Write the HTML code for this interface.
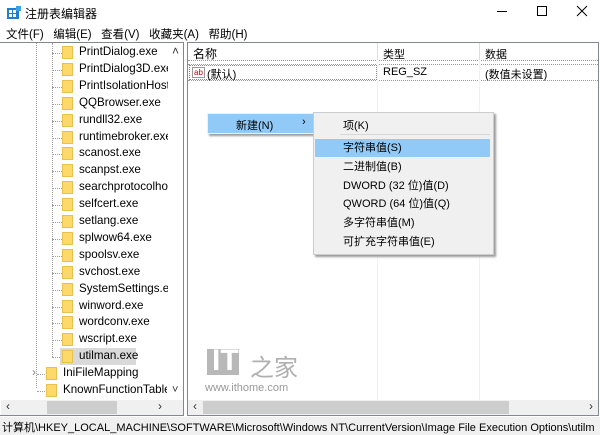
<!DOCTYPE html><html><head><meta charset="utf-8"><style>
*{margin:0;padding:0;box-sizing:border-box}
body{width:600px;height:435px;background:#fff;font-family:"Liberation Sans","Noto Sans CJK SC",sans-serif;font-size:11.5px;color:#000;position:relative;overflow:hidden}
.a{position:absolute;white-space:nowrap}
.f{position:absolute;width:11px;height:13px;background:#fcd96a;border:1px solid #e8c04c}
.r{position:absolute;left:79px;font-size:11.6px}
.hl{position:absolute;border-top:1px dotted #a0a0a0;width:12px}
</style></head><body>
<svg class="a" style="left:7px;top:6px" width="14" height="14"><rect x="0" y="2" width="12" height="11" fill="#1e7fd0"/><g fill="#fff"><rect x="2" y="4" width="3" height="3"/><rect x="6" y="4" width="3" height="3"/><rect x="2" y="8" width="3" height="3"/><rect x="6" y="8" width="3" height="3"/></g><rect x="9" y="0" width="5" height="5" fill="#3aa0e8"/></svg>
<div class="a" style="left:25px;top:5px;font-size:12px">注册表编辑器</div>
<div class="a" style="left:497px;top:11px;width:10px;border-top:1px solid #000"></div>
<div class="a" style="left:537px;top:6px;width:10px;height:10px;border:1px solid #000"></div>
<svg class="a" style="left:576px;top:5px" width="12" height="12"><path d="M1 1L11 11M11 1L1 11" stroke="#000" stroke-width="1"/></svg>
<div class="a" style="left:6px;top:26px;font-size:11.5px">文件(F)&nbsp;&nbsp;&nbsp;编辑(E)&nbsp;&nbsp;&nbsp;查看(V)&nbsp;&nbsp;&nbsp;收藏夹(A)&nbsp;&nbsp;&nbsp;帮助(H)</div>
<div class="a" style="left:0;top:42px;width:184px;height:374px;border:1px solid #828790;border-left:none"></div>
<div class="a" style="left:36px;top:43px;height:345px;border-left:1px dotted #a0a0a0"></div>
<div class="a" style="left:52px;top:43px;height:314px;border-left:1px dotted #a0a0a0"></div>
<div class="a" style="left:172px;top:44px;font-size:12px;color:#333">˄</div>
<div class="a" style="left:172px;top:384px;font-size:11px;color:#333">˅</div>
<div class="a" style="left:1px;top:400px;width:182px;height:15px;background:#f0f0f0"></div>
<div class="a" style="left:47px;top:401px;width:70px;height:13px;background:#cdcdcd"></div>
<div class="a" style="left:6px;top:399px;font-size:12px;color:#333">‹</div>
<div class="a" style="left:158px;top:399px;font-size:12px;color:#333">›</div>
<div id="tree"></div>
<div class="a" style="left:187px;top:42px;width:412px;height:374px;border:1px solid #828790"></div>
<div class="a" style="left:188px;top:60px;width:410px;border-top:1px dotted #999"></div>
<div class="a" style="left:188px;top:64px;width:410px;border-top:1px dotted #999"></div>
<div class="a" style="left:188px;top:80px;width:410px;border-top:1px dotted #999"></div>
<div class="a" style="left:377px;top:43px;height:357px;border-left:1px solid #eef2f8"></div>
<div class="a" style="left:479px;top:43px;height:357px;border-left:1px solid #eef2f8"></div>
<div class="a" style="left:377px;top:43px;height:17px;border-left:1px solid #ddd"></div>
<div class="a" style="left:479px;top:43px;height:17px;border-left:1px solid #ddd"></div>
<div class="a" style="left:193px;top:45px;font-size:12px">名称</div>
<div class="a" style="left:383px;top:46px;font-size:11px">类型</div>
<div class="a" style="left:485px;top:46px;font-size:11px">数据</div>
<div class="a" style="left:189px;top:65px;width:188px;height:15px;border:1px dotted #888"></div>
<div class="a" style="left:192px;top:67px;width:13px;height:11px;border:1px solid #999;font-size:8px;color:#c00;line-height:9px;padding-left:1px">ab</div>
<div class="a" style="left:207px;top:66px;font-size:11px">(默认)</div>
<div class="a" style="left:383px;top:66px;font-size:11px">REG_SZ</div>
<div class="a" style="left:485px;top:66px;font-size:11px">(数值未设置)</div>
<div class="a" style="left:188px;top:400px;width:410px;height:15px;background:#f0f0f0"></div>
<div class="a" style="left:203px;top:401px;width:306px;height:13px;background:#cdcdcd"></div>
<div class="a" style="left:193px;top:399px;font-size:12px;color:#333">‹</div>
<div class="a" style="left:589px;top:399px;font-size:12px;color:#333">›</div>
<div class="a" style="left:207px;top:349px;width:32px;height:26px;background:#b8b8b8"></div>
<div class="a" style="left:212px;top:346px;font-size:30px;font-weight:bold;color:#fff;line-height:30px">IT</div>
<div class="a" style="left:250px;top:348px;font-size:24px;color:#b0b0b0;font-family:'Noto Sans CJK SC',sans-serif">之家</div>
<div class="a" style="left:205px;top:382px;font-size:11px;color:#999">www.ithome.com</div>
<div class="a" style="left:0;top:417px;width:600px;height:18px;background:#f0f0f0"></div>
<div class="a" style="left:2px;top:419px;font-size:11px">计算机\HKEY_LOCAL_MACHINE\SOFTWARE\Microsoft\Windows NT\CurrentVersion\Image File Execution Options\utilm</div>
<div class="a" style="left:207px;top:113px;width:108px;height:21px;background:#f0f0f0;box-shadow:2px 2px 2px #999"></div>
<div class="a" style="left:208px;top:114px;width:106px;height:19px;background:#91c9f7"></div>
<div class="a" style="left:236px;top:117px;font-size:11px">新建(N)</div>
<div class="a" style="left:302px;top:116px;font-size:11px">›</div>
<div class="a" style="left:313px;top:112px;width:181px;height:143px;background:#f0f0f0;border:1px solid #ccc;box-shadow:2px 2px 2px #999"></div>
<div class="a" style="left:340px;top:134px;width:150px;border-top:1px solid #d7d7d7"></div>
<div class="a" style="left:315px;top:139px;width:175px;height:18px;background:#91c9f7"></div>
<div class="a" style="left:343px;top:117px;font-size:11px;line-height:19px">项(K)</div>
<div class="a" style="left:343px;top:139px;font-size:11px;line-height:18.8px">字符串值(S)<br>二进制值(B)<br>DWORD (32 位)值(D)<br>QWORD (64 位)值(Q)<br>多字符串值(M)<br>可扩充字符串值(E)</div>
<script>
var n=["PrintDialog.exe","PrintDialog3D.exe","PrintIsolationHost","QQBrowser.exe","rundll32.exe","runtimebroker.exe","scanost.exe","scanpst.exe","searchprotocolho","selfcert.exe","setlang.exe","splwow64.exe","spoolsv.exe","svchost.exe","SystemSettings.ex","winword.exe","wordconv.exe","wscript.exe","utilman.exe"];
var h="";
n.forEach(function(s,i){var y=45+i*16.9;
h+='<div class="hl" style="left:52px;top:'+(y+8)+'px"></div><div class="f" style="left:62px;top:'+(y+1)+'px"></div>';
if(i==18)h+='<div class="a" style="left:60px;top:'+(y-1)+'px;width:76px;height:17px;background:#d9d9d9"></div><div class="f" style="left:62px;top:'+(y+1)+'px"></div>';
h+='<div class="r" style="top:'+y+'px;width:89px;overflow:hidden">'+s+'</div>';});
[["IniFileMapping",366],["KnownFunctionTable[",383]].forEach(function(a,i){var y=a[1];
h+='<div class="hl" style="left:37px;top:'+(y+8)+'px"></div><div class="f" style="left:46px;top:'+(y+1)+'px"></div><div class="a" style="left:63px;top:'+y+'px;font-size:11.6px;width:104px;overflow:hidden">'+a[0]+'</div>';
if(i==0)h+='<div class="a" style="left:32px;top:'+(y-1)+'px;color:#888;font-size:12px">›</div>';});
document.getElementById("tree").innerHTML=h;
</script>
</body></html>
